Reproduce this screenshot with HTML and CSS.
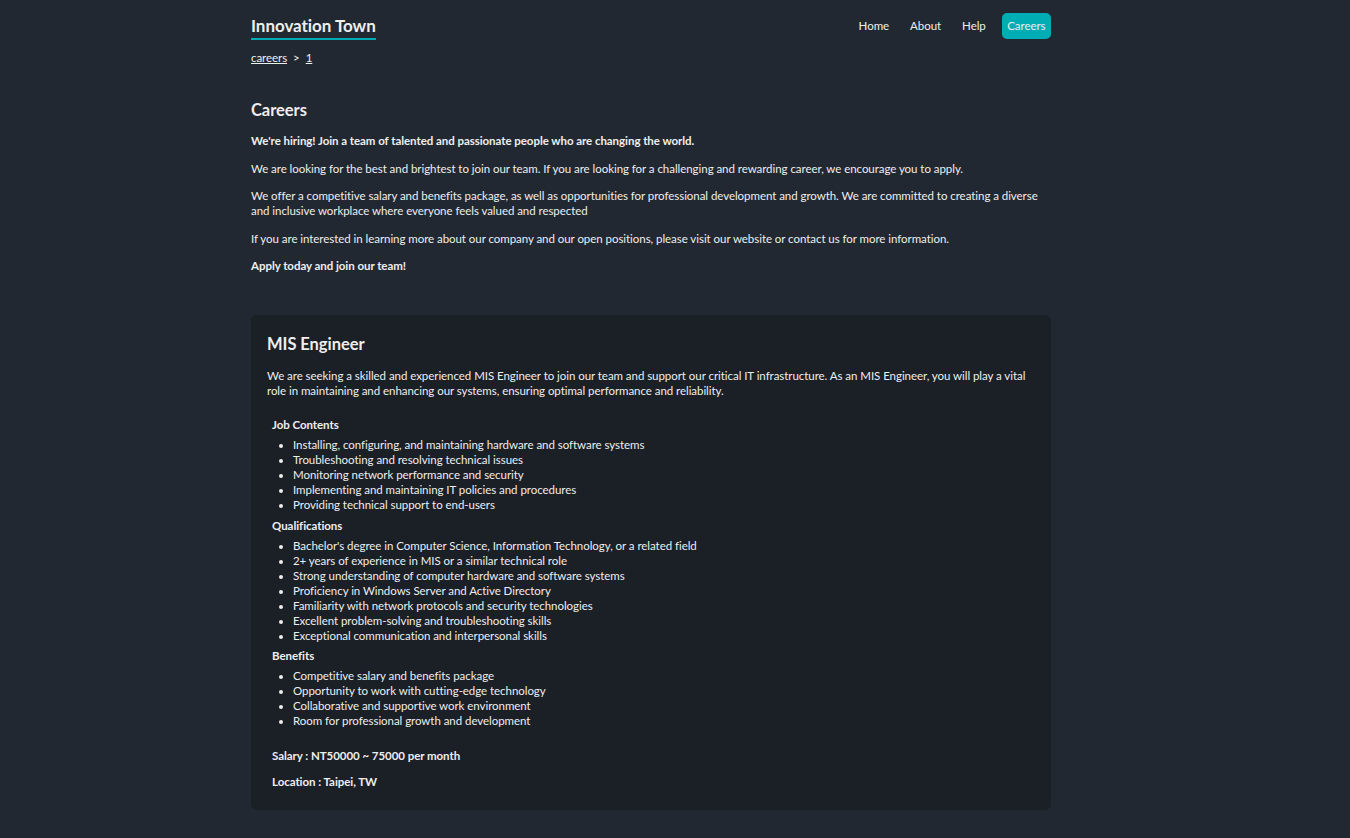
FILE: index.html
```html
<!DOCTYPE html>
<html lang="en">
<head>
<meta charset="utf-8">
<title>Careers - Innovation Town</title>
<link rel="stylesheet" href="styles.css">
</head>
<body>
<div class="page">
  <header class="topbar">
    <a class="brand" href="#">Innovation Town</a>
    <nav class="nav">
      <a href="#">Home</a>
      <a href="#">About</a>
      <a href="#">Help</a>
      <a href="#" class="active">Careers</a>
    </nav>
  </header>
  <div class="crumbs"><a href="#">careers</a><span class="sep">&gt;</span><a href="#">1</a></div>

  <section class="intro">
    <h1>Careers</h1>
    <p class="strong">We're hiring! Join a team of talented and passionate people who are changing the world.</p>
    <p>We are looking for the best and brightest to join our team. If you are looking for a challenging and rewarding career, we encourage you to apply.</p>
    <p>We offer a competitive salary and benefits package, as well as opportunities for professional development and growth. We are committed to creating a diverse and inclusive workplace where everyone feels valued and respected</p>
    <p>If you are interested in learning more about our company and our open positions, please visit our website or contact us for more information.</p>
    <p class="strong">Apply today and join our team!</p>
  </section>

  <article class="job">
    <h2>MIS Engineer</h2>
    <p class="desc">We are seeking a skilled and experienced MIS Engineer to join our team and support our critical IT infrastructure. As an MIS Engineer, you will play a vital role in maintaining and enhancing our systems, ensuring optimal performance and reliability.</p>
    <div class="details">
      <h3>Job Contents</h3>
      <ul>
        <li>Installing, configuring, and maintaining hardware and software systems</li>
        <li>Troubleshooting and resolving technical issues</li>
        <li>Monitoring network performance and security</li>
        <li>Implementing and maintaining IT policies and procedures</li>
        <li>Providing technical support to end-users</li>
      </ul>
      <h3>Qualifications</h3>
      <ul>
        <li>Bachelor's degree in Computer Science, Information Technology, or a related field</li>
        <li>2+ years of experience in MIS or a similar technical role</li>
        <li>Strong understanding of computer hardware and software systems</li>
        <li>Proficiency in Windows Server and Active Directory</li>
        <li>Familiarity with network protocols and security technologies</li>
        <li>Excellent problem-solving and troubleshooting skills</li>
        <li>Exceptional communication and interpersonal skills</li>
      </ul>
      <h3>Benefits</h3>
      <ul>
        <li>Competitive salary and benefits package</li>
        <li>Opportunity to work with cutting-edge technology</li>
        <li>Collaborative and supportive work environment</li>
        <li>Room for professional growth and development</li>
      </ul>
      <p class="meta salary">Salary : NT50000 ~ 75000 per month</p>
      <p class="meta">Location : Taipei, TW</p>
    </div>
  </article>
</div>
</body>
</html>
```

FILE: styles.css
```css
* { box-sizing: border-box; }
html, body { margin: 0; padding: 0; }
body {
  background: #222831;
  color: #eeeeee;
  font-family: Lato, "Open Sans", sans-serif;
  font-size: 11.5px;
  letter-spacing: -0.05px;
  line-height: 15px;
  padding-right: 48px;
}
a { color: #eeeeee; }
.page {
  width: 800px;
  margin: 0 auto;
  padding-top: 13px;
  padding-bottom: 29px;
}
.topbar {
  display: flex;
  justify-content: space-between;
  align-items: flex-start;
  height: 26px;
}
.brand {
  font-size: 17px;
  font-weight: 700;
  line-height: 24px;
  text-decoration: none;
  border-bottom: 2px solid #00adb5;
  margin-top: 1px;
}
.nav {
  display: flex;
  align-items: center;
}
.nav a {
  text-decoration: none;
  padding: 0 10px;
  line-height: 26px;
  margin-left: 1px;
}
.nav a.active {
  background: #00adb5;
  border-radius: 5px;
  padding: 0 5.5px;
  margin-left: 6px;
}
.crumbs {
  margin-top: 11px;
  line-height: 15px;
}
.crumbs .sep { margin: 0 6px; }
.intro { margin-top: 33px; }
h1 {
  font-size: 16.5px;
  line-height: 24px;
  font-weight: 700;
  margin: 0 0 11px;
}
.intro p { margin: 0 0 12.6px; }
.strong { font-weight: 700; }
.job {
  margin-top: 42px;
  background: #1b1f26;
  border-radius: 6px;
  padding: 17px 16px 21px;
}
h2 {
  font-size: 16.5px;
  line-height: 24px;
  font-weight: 700;
  margin: 0 0 12px;
}
.desc { margin: 0 0 19px; }
.details { padding-left: 5px; }
h3 {
  font-size: 11.5px;
  font-weight: 700;
  line-height: 15px;
  margin: 0 0 5px;
}
ul {
  margin: 0 0 5.5px;
  padding-left: 21px;
}
.meta { font-weight: 700; margin: 11px 0 0; }
.meta.salary { margin-top: 19.5px; }
```
